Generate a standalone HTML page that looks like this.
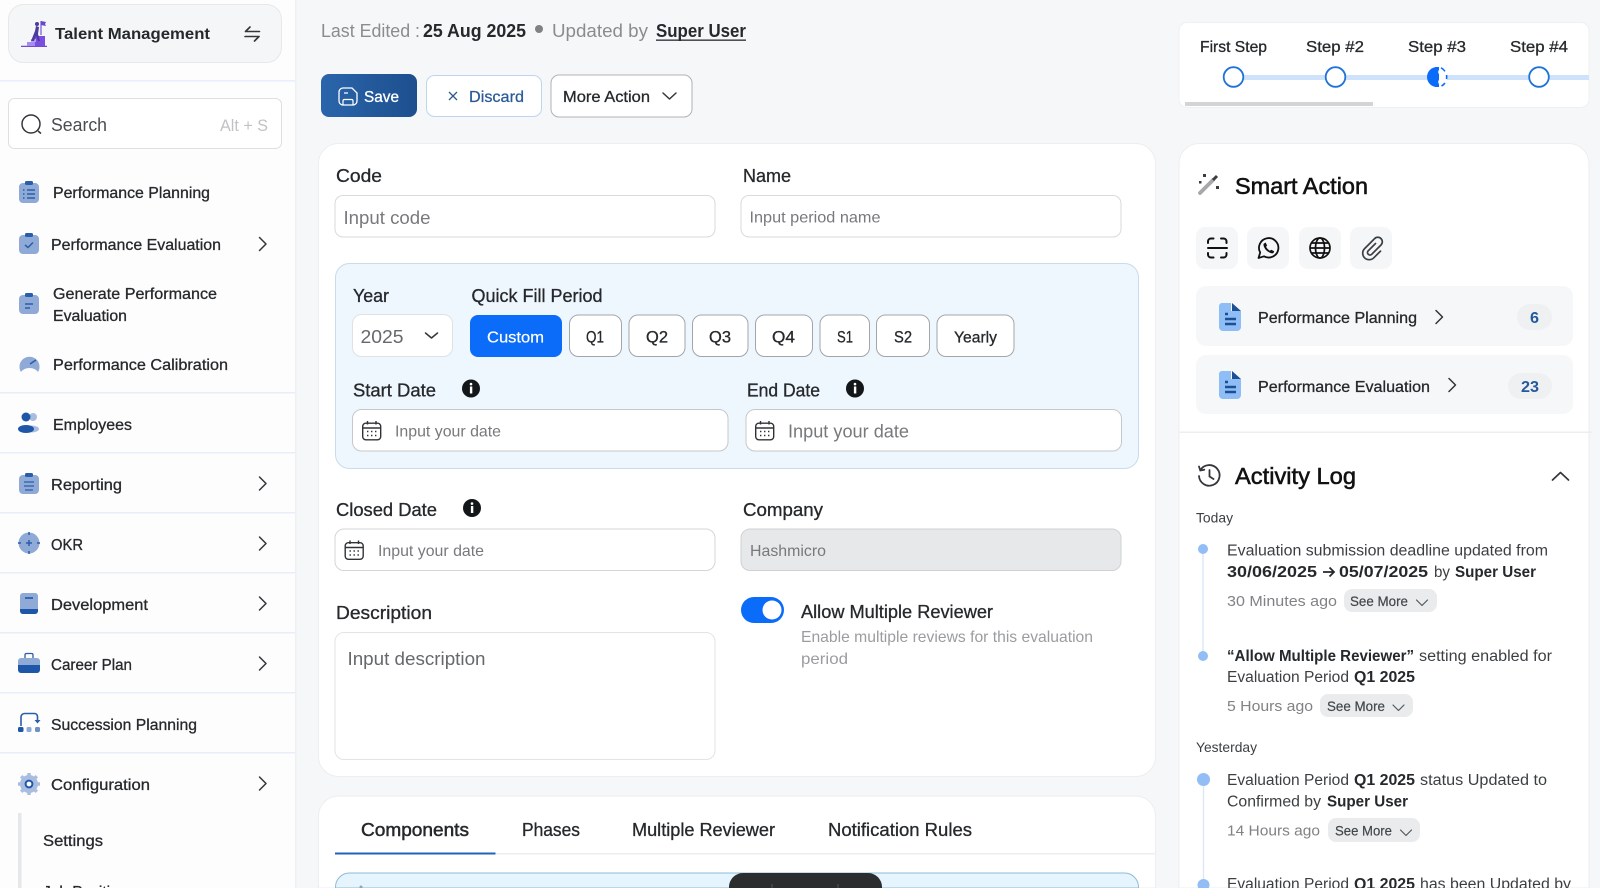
<!DOCTYPE html>
<html lang="en"><head><meta charset="utf-8"><title>Talent Management</title>
<style>
html,body{margin:0;padding:0;width:1600px;height:888px;overflow:hidden;background:#f5f7f9}
#w{position:absolute;left:0;top:0;width:1600px;height:888px;overflow:hidden}
svg{display:block;filter:blur(.25px)}
text{font-family:"Liberation Sans",sans-serif;font-size:16px;fill:#26292c;white-space:pre}
.m{stroke:#26292c;stroke-width:.3}
.b{font-weight:700}
.h{font-size:18px}
.p{font-size:16px;fill:#77797c}
.pl{font-size:18px;fill:#77797c}
.t{font-size:15.5px;fill:#3c3f42}
.tb{font-size:15.5px;font-weight:700;fill:#26292c}
.g{font-size:15px;fill:#808285}
.s{font-size:13.5px;fill:#44474a;stroke:#44474a;stroke-width:.2}
.ch{fill:none;stroke:#33363a;stroke-width:1.5;stroke-linecap:round;stroke-linejoin:round}
</style></head><body><div id="w">
<svg width="1600" height="888" viewBox="0 0 1600 888" xmlns="http://www.w3.org/2000/svg">
<defs>
<g id="cr"><path class="ch" d="M0 0l6.5 6.5L0 13"/></g>
<g id="cd"><path class="ch" d="M0 0l5.5 5.5L11 0" style="stroke-width:1.2;stroke:#55585b"/></g>
<g id="cal" fill="none" stroke="#303336" stroke-width="1.4"><rect x=".7" y="2.7" width="18" height="16.6" rx="3.2"/><path d="M.7 7.5h18M5.5 .5v3.5M14 .5v3.5"/><path d="M5 11h1.4M9 11h1.4M13 11h1.4M5 15h1.4M9 15h1.4M13 15h1.4" stroke-width="1.5"/></g>
<g id="inf"><circle r="9" fill="#14171a"/><rect x="-1.1" y="-2" width="2.4" height="7" fill="#fff"/><circle cy="-4.4" r="1.3" fill="#fff"/></g>
<g id="doc"><path d="M3 0h9v8h10v16a4 4 0 0 1-4 4H4a4 4 0 0 1-4-4V3a3 3 0 0 1 3-3z" fill="#8fbdf5"/><path d="M13 0l9 8h-9z" fill="#1d4f94"/><path d="M6 11h3M6 16h11M6 21h11" stroke="#1d4f94" stroke-width="2.4" fill="none"/></g>
<linearGradient id="sv" x1="0" x2="1"><stop offset="0" stop-color="#2a65ab"/><stop offset="1" stop-color="#1d4f8e"/></linearGradient>
</defs>

<!-- sidebar -->
<rect x="0" y="0" width="295" height="888" fill="#fdfdfe"/>
<rect x="295" y="0" width="1.5" height="888" fill="#eef1f4"/>
<rect x="8.5" y="4.5" width="273" height="58" rx="15" fill="#f4f6f8" stroke="#e6e8ea"/>
<rect x="0" y="80" width="295" height="1.6" fill="#e8eefb"/>
<!-- logo -->
<path d="M21 46.300h26" stroke="#5b35c9" stroke-width="1.200"/>
<path d="M35 46V36h10v10z" fill="#7a4fe0"/><path d="M27 46v-4h8v4z" fill="#a78bee"/><path d="M31 42v-3h5v3z" fill="#b79ff2"/>
<path d="M31 41l4-10 1-5 3 1-1 7 2 7h-2l-2-5-2 5z" fill="#4d3a9e"/><circle cx="37" cy="24" r="2" fill="#4d3a9e"/>
<path d="M41 21v14" stroke="#5b35c9"/><path d="M41 21l5 1-1 2 1 2-5-1z" fill="#6a46cf"/>
<text class="b" x="55" y="39" textLength="155" lengthAdjust="spacingAndGlyphs">Talent Management</text>
<path class="ch" d="M245.500 31.500h14M245.500 31.500l4.500-4.500M259 36.500h-14M259 36.500l-4.500 4.500" style="stroke-width:1.600"/>

<rect x="8.500" y="98.500" width="273" height="50" rx="6" fill="#fff" stroke="#dcdfe3"/>
<circle cx="31" cy="124" r="9" fill="none" stroke="#33363a" stroke-width="1.500"/><path d="M38 131l3 2.500" stroke="#33363a" stroke-width="1.500"/>
<text x="51" y="131" textLength="56" lengthAdjust="spacingAndGlyphs" style="font-size:18px;fill:#4a4d50">Search</text>
<text x="220" y="131" textLength="48" lengthAdjust="spacingAndGlyphs" style="font-size:17px;fill:#c0c2c5">Alt + S</text>

<!-- menu icons -->
<g><rect x="19" y="183" width="20" height="20" rx="4" fill="#8faad6"/><rect x="25" y="181" width="8" height="4" rx="1.500" fill="#2a5ea8"/><path d="M23 190h1.500M27 190h8M23 194h1.500M27 194h8M23 198h1.500M27 198h8" stroke="#2a5ea8" stroke-width="1.400"/></g>
<g><rect x="19" y="235" width="20" height="19" rx="4" fill="#8faad6"/><rect x="25" y="233" width="8" height="4" rx="1.500" fill="#2a5ea8"/><path d="M25 245l3 2.500 5-5" fill="none" stroke="#2a5ea8" stroke-width="1.500"/></g>
<g><rect x="19" y="295" width="20" height="19" rx="4" fill="#8faad6"/><rect x="25" y="293" width="8" height="4" rx="1.500" fill="#2a5ea8"/><path d="M25 304h8M25 308h5" stroke="#2a5ea8" stroke-width="1.600"/></g>
<path d="M21 372a10 10 0 1 1 17 0q-3-4-8.500-4t-8.500 4z" fill="#8faad6"/><path d="M30 364l6-4" stroke="#2a5ea8" stroke-width="1.600"/>
<g><circle cx="33" cy="417" r="4" fill="#a9bde0"/><ellipse cx="31" cy="429" rx="8" ry="3.500" fill="#a9bde0"/><circle cx="26" cy="417" r="4.500" fill="#1f57a8"/><ellipse cx="26" cy="429" rx="8" ry="4" fill="#1f57a8"/></g>
<g><rect x="19" y="475" width="20" height="19" rx="4" fill="#8faad6"/><rect x="25" y="473" width="8" height="4" rx="1.500" fill="#2a5ea8"/><path d="M24 482h10M24 486h10M25 490h8" stroke="#2a5ea8" stroke-width="1.300"/></g>
<g><circle cx="29" cy="543" r="10.500" fill="#8faad6"/><path d="M26 543h6M29 540v6M18 543h3M37 543h3M29 532v3M29 551v3" stroke="#2a5ea8" stroke-width="1.500"/></g>
<g><rect x="20" y="593" width="18" height="21" rx="3" fill="#8faad6"/><path d="M20 609h18v2a3 3 0 0 1-3 3H23a3 3 0 0 1-3-3z" fill="#1f57a8"/><path d="M25 598h8" stroke="#1f57a8" stroke-width="1.600"/></g>
<g><path d="M25 658v-3q0-1.500 1.500-1.500h5q1.500 0 1.500 1.500v3" fill="none" stroke="#2a5ea8" stroke-width="1.300"/><path d="M18 661a3 3 0 0 1 3-3h16a3 3 0 0 1 3 3v4H18z" fill="#8faad6"/><path d="M18 665h22v5a3 3 0 0 1-3 3H21a3 3 0 0 1-3-3z" fill="#1f57a8"/></g>
<g><path d="M21 726v-9a3.500 3.500 0 0 1 3.500-3.500h10a3 3 0 0 1 3 3v4" fill="none" stroke="#2a5ea8" stroke-width="1.600"/><path d="M34.500 720l3 3.500 3-3.500" fill="#2a5ea8"/><rect x="18" y="727" width="5.500" height="5" rx="1.500" fill="#1f57a8"/><rect x="26.500" y="727" width="5" height="5" rx="1.500" fill="#8faad6"/><rect x="35" y="727" width="5" height="5" rx="1.500" fill="#6f90c6"/></g>
<g><circle cx="29" cy="784" r="9" fill="#a9bde0"/><path d="M29 773v22M18 784h22M21.200 776.200l15.600 15.600M36.800 776.200l-15.600 15.600" stroke="#a9bde0" stroke-width="3.500"/><circle cx="29" cy="784" r="3.400" fill="#fff" stroke="#1f57a8" stroke-width="2"/></g>

<text class="m" x="53" y="198" textLength="157" lengthAdjust="spacingAndGlyphs">Performance Planning</text>
<text class="m" x="51" y="250" textLength="170" lengthAdjust="spacingAndGlyphs">Performance Evaluation</text>
<use href="#cr" x="259.500" y="237.500"/>
<text class="m" x="53" y="299" textLength="164" lengthAdjust="spacingAndGlyphs">Generate Performance</text>
<text class="m" x="53" y="321" textLength="74" lengthAdjust="spacingAndGlyphs">Evaluation</text>
<text class="m" x="53" y="370" textLength="175" lengthAdjust="spacingAndGlyphs">Performance Calibration</text>
<rect x="0" y="392" width="295" height="1.500" fill="#e8eef8"/>
<text class="m" x="53" y="430" textLength="79" lengthAdjust="spacingAndGlyphs">Employees</text>
<rect x="0" y="452" width="295" height="1.500" fill="#e8eef8"/>
<text class="m" x="51" y="490" textLength="71" lengthAdjust="spacingAndGlyphs">Reporting</text>
<use href="#cr" x="259.500" y="477"/>
<rect x="0" y="512" width="295" height="1.500" fill="#e8eef8"/>
<text class="m" x="51" y="550" textLength="32" lengthAdjust="spacingAndGlyphs">OKR</text>
<use href="#cr" x="259.500" y="537"/>
<rect x="0" y="572" width="295" height="1.500" fill="#e8eef8"/>
<text class="m" x="51" y="610" textLength="97" lengthAdjust="spacingAndGlyphs">Development</text>
<use href="#cr" x="259.500" y="597"/>
<rect x="0" y="632" width="295" height="1.500" fill="#e8eef8"/>
<text class="m" x="51" y="670" textLength="81" lengthAdjust="spacingAndGlyphs">Career Plan</text>
<use href="#cr" x="259.500" y="657"/>
<rect x="0" y="692" width="295" height="1.500" fill="#e8eef8"/>
<text class="m" x="51" y="730" textLength="146" lengthAdjust="spacingAndGlyphs">Succession Planning</text>
<rect x="0" y="752" width="295" height="1.500" fill="#e8eef8"/>
<text class="m" x="51" y="790" textLength="99" lengthAdjust="spacingAndGlyphs">Configuration</text>
<use href="#cr" x="259.500" y="777"/>
<rect x="18" y="813" width="3.500" height="75" fill="#e6e7e9"/>
<text class="m" x="43" y="846" textLength="60" lengthAdjust="spacingAndGlyphs">Settings</text>
<text class="m" x="43" y="897" textLength="92" lengthAdjust="spacingAndGlyphs">Job Positions</text>

<!-- top bar -->
<text class="h" x="321" y="37" textLength="99" lengthAdjust="spacingAndGlyphs" style="fill:#8a8c8f">Last Edited :</text>
<text class="h b" x="423" y="37" textLength="103" lengthAdjust="spacingAndGlyphs">25 Aug 2025</text>
<circle cx="539" cy="29" r="4" fill="#808285"/>
<text class="h" x="552" y="37" textLength="96" lengthAdjust="spacingAndGlyphs" style="fill:#8a8c8f">Updated by</text>
<text class="h b" x="656" y="37" textLength="90" lengthAdjust="spacingAndGlyphs">Super User</text>
<rect x="656" y="39.500" width="90" height="1.300" fill="#26292c"/>

<rect x="321" y="74" width="96" height="43" rx="8" fill="url(#sv)"/>
<path d="M343 88h9l5 5v8a4 4 0 0 1-4 4h-10a4 4 0 0 1-4-4v-9a4 4 0 0 1 4-4z" fill="none" stroke="#fff" stroke-width="1.300"/><path d="M343 105v-4q0-1.500 1.500-1.500h7q1.500 0 1.500 1.500v4M344 93h4" fill="none" stroke="#fff" stroke-width="1.200"/>
<text x="364" y="102" textLength="35" lengthAdjust="spacingAndGlyphs" style="fill:#fff;stroke:#fff;stroke-width:.3">Save</text>
<rect x="426.500" y="75.500" width="115" height="41" rx="8" fill="#fff" stroke="#bcd6f0"/>
<path d="M449 92l8 8M457 92l-8 8" stroke="#2b5a96" stroke-width="1.300"/>
<text x="469" y="102" textLength="55" lengthAdjust="spacingAndGlyphs" style="fill:#2b5a96;stroke:#2b5a96;stroke-width:.25">Discard</text>
<rect x="551" y="75" width="141" height="42" rx="8" fill="#fff" stroke="#b0b3b6"/>
<text class="m" x="563" y="102" textLength="87" lengthAdjust="spacingAndGlyphs">More Action</text>
<path class="ch" d="M663 93l6.500 6 6.500-6"/>

<!-- card 1 -->
<rect x="318.500" y="143.500" width="837" height="633" rx="20" fill="#fff" stroke="#eceef0"/>
<text class="h m" x="336" y="182" textLength="46" lengthAdjust="spacingAndGlyphs">Code</text>
<text class="h m" x="743" y="182" textLength="48" lengthAdjust="spacingAndGlyphs">Name</text>
<rect x="335" y="195.500" width="380" height="41.500" rx="8" fill="#fff" stroke="#d8dadc"/>
<text class="pl" x="343.500" y="224" textLength="87" lengthAdjust="spacingAndGlyphs">Input code</text>
<rect x="741" y="195.500" width="380" height="41.500" rx="8" fill="#fff" stroke="#d8dadc"/>
<text class="p" x="749.500" y="222.500" textLength="131" lengthAdjust="spacingAndGlyphs">Input period name</text>

<!-- blue panel -->
<rect x="335.500" y="263.500" width="803" height="205" rx="14" fill="#eef6fe" stroke="#c8dcec"/>
<text class="h m" x="353" y="302" textLength="36" lengthAdjust="spacingAndGlyphs">Year</text>
<text class="h m" x="471.500" y="302" textLength="131" lengthAdjust="spacingAndGlyphs">Quick Fill Period</text>
<rect x="352.500" y="314.500" width="100" height="42" rx="9" fill="#fff" stroke="#dfe2e5"/>
<text class="pl" x="360.500" y="343" textLength="43" lengthAdjust="spacingAndGlyphs" style="fill:#66696c">2025</text>
<path class="ch" d="M425.500 333l6 5 6-5"/>
<rect x="470" y="315" width="92" height="42" rx="8" fill="#0a6cf8"/>
<text x="487" y="342.500" textLength="57" lengthAdjust="spacingAndGlyphs" style="fill:#fff;stroke:#fff;stroke-width:.2">Custom</text>
<g fill="#fff" stroke="#a3a6a9">
<rect x="569.500" y="315" width="52" height="41.500" rx="9"/>
<rect x="629" y="315" width="56" height="41.500" rx="9"/>
<rect x="692.500" y="315" width="55.500" height="41.500" rx="9"/>
<rect x="755.500" y="315" width="57" height="41.500" rx="9"/>
<rect x="820" y="315" width="49.500" height="41.500" rx="9"/>
<rect x="876.500" y="315" width="53" height="41.500" rx="9"/>
<rect x="937" y="315" width="77" height="41.500" rx="9"/>
</g>
<text class="m" x="586" y="342.500" textLength="18" lengthAdjust="spacingAndGlyphs" style="font-size:17px">Q1</text>
<text class="m" x="646" y="342.500" textLength="22" lengthAdjust="spacingAndGlyphs" style="font-size:17px">Q2</text>
<text class="m" x="709" y="342.500" textLength="22" lengthAdjust="spacingAndGlyphs" style="font-size:17px">Q3</text>
<text class="m" x="772" y="342.500" textLength="23" lengthAdjust="spacingAndGlyphs" style="font-size:17px">Q4</text>
<text class="m" x="837" y="342.500" textLength="16" lengthAdjust="spacingAndGlyphs" style="font-size:17px">S1</text>
<text class="m" x="894" y="342.500" textLength="18" lengthAdjust="spacingAndGlyphs" style="font-size:17px">S2</text>
<text class="m" x="954" y="342.500" textLength="43" lengthAdjust="spacingAndGlyphs">Yearly</text>
<text class="h m" x="353" y="396.500" textLength="83" lengthAdjust="spacingAndGlyphs">Start Date</text>
<use href="#inf" x="471" y="388.500"/>
<text class="h m" x="747" y="396.500" textLength="73" lengthAdjust="spacingAndGlyphs">End Date</text>
<use href="#inf" x="855" y="388.500"/>
<rect x="352.500" y="409.500" width="375.500" height="41.500" rx="9" fill="#fff" stroke="#c5c8cb"/>
<use href="#cal" x="362" y="420.500"/>
<text class="p" x="395" y="436.500" textLength="106" lengthAdjust="spacingAndGlyphs">Input your date</text>
<rect x="746" y="409.500" width="375.500" height="41.500" rx="9" fill="#fff" stroke="#c5c8cb"/>
<use href="#cal" x="755" y="420.500"/>
<text class="pl" x="788" y="437.500" textLength="121" lengthAdjust="spacingAndGlyphs">Input your date</text>

<text class="h m" x="336" y="516" textLength="101" lengthAdjust="spacingAndGlyphs">Closed Date</text>
<use href="#inf" x="472" y="508"/>
<text class="h m" x="743" y="516" textLength="80" lengthAdjust="spacingAndGlyphs">Company</text>
<rect x="335" y="529" width="380" height="41.500" rx="9" fill="#fff" stroke="#d3d5d8"/>
<use href="#cal" x="344.500" y="540"/>
<text class="p" x="378" y="556" textLength="106" lengthAdjust="spacingAndGlyphs">Input your date</text>
<rect x="741" y="529" width="380" height="41.500" rx="9" fill="#e6e8ea" stroke="#cfd2d5"/>
<text class="p" x="750" y="556" textLength="76" lengthAdjust="spacingAndGlyphs">Hashmicro</text>
<text class="h m" x="336" y="619" textLength="96" lengthAdjust="spacingAndGlyphs">Description</text>
<rect x="335" y="632.500" width="380" height="127" rx="9" fill="#fff" stroke="#e2e4e6"/>
<text class="pl" x="347.500" y="665" textLength="138" lengthAdjust="spacingAndGlyphs" style="fill:#66696c">Input description</text>
<rect x="741" y="597" width="43" height="26" rx="13" fill="#0a6cf8"/><circle cx="772" cy="610" r="9.500" fill="#fff"/>
<text class="h m" x="801" y="618" textLength="192" lengthAdjust="spacingAndGlyphs">Allow Multiple Reviewer</text>
<text class="p" x="801" y="642" textLength="292" lengthAdjust="spacingAndGlyphs" style="fill:#9a9c9f">Enable multiple reviews for this evaluation</text>
<text class="p" x="801" y="664" textLength="47" lengthAdjust="spacingAndGlyphs" style="fill:#9a9c9f">period</text>

<!-- card 2 -->
<path d="M318.500 888V816a20 20 0 0 1 20-20h797a20 20 0 0 1 20 20v72z" fill="#fff" stroke="#eceef0"/>
<text class="h m" x="361" y="836" textLength="108" lengthAdjust="spacingAndGlyphs" style="stroke-width:.5">Components</text>
<text class="h m" x="522" y="836" textLength="58" lengthAdjust="spacingAndGlyphs">Phases</text>
<text class="h m" x="632" y="836" textLength="143" lengthAdjust="spacingAndGlyphs">Multiple Reviewer</text>
<text class="h m" x="828" y="836" textLength="144" lengthAdjust="spacingAndGlyphs">Notification Rules</text>
<rect x="335" y="853" width="820" height="1.500" fill="#eceef0"/>
<rect x="335" y="852.500" width="160.500" height="2" fill="#1f62c0"/>
<path d="M335.500 888v-1a14 14 0 0 1 14-14h775a14 14 0 0 1 14 14v1z" fill="#e6f4fd" stroke="#8fbbd8"/>
<circle cx="361" cy="887" r="1.500" fill="#8fa5b5"/>
<path d="M729 888v-1a14 14 0 0 1 14-14h125a14 14 0 0 1 14 14v1z" fill="#2b2d2f"/>
<path d="M772 884v4M838 884v4" stroke="#55585a"/>

<!-- stepper -->
<rect x="1179" y="22.500" width="410" height="85" rx="8" fill="#fff" stroke="#eef0f2"/>
<text class="m" x="1200" y="52" textLength="67" lengthAdjust="spacingAndGlyphs">First Step</text>
<text class="m" x="1306" y="52" textLength="58" lengthAdjust="spacingAndGlyphs">Step #2</text>
<text class="m" x="1408" y="52" textLength="58" lengthAdjust="spacingAndGlyphs">Step #3</text>
<text class="m" x="1510" y="52" textLength="58" lengthAdjust="spacingAndGlyphs">Step #4</text>
<rect x="1240" y="75" width="349" height="5" fill="#cfe2fb"/>
<g fill="#fff" stroke="#1f72d8" stroke-width="1.800">
<circle cx="1233.500" cy="77" r="9.800"/><circle cx="1335.500" cy="77" r="9.800"/><circle cx="1539" cy="77" r="9.800"/></g>
<circle cx="1437" cy="77" r="10" fill="#fff"/>
<path d="M1437 67a10 10 0 0 0 0 20z" fill="#0a6cf8"/>
<path d="M1435 67h4v20h-4z" fill="#0a6cf8"/><path d="M1439 70.500v3M1439 80.500v3" stroke="#fff" stroke-width="1.500"/>
<path d="M1441 67.800a10 10 0 0 1 4 3.500M1446.500 75a10 10 0 0 1 0 4M1445 83a10 10 0 0 1-3.500 3" fill="none" stroke="#0a6cf8" stroke-width="1.600"/>
<rect x="1185" y="102" width="188" height="4" fill="#d4d4d5"/>

<!-- right card -->
<path d="M1179 888V163.500a20 20 0 0 1 20-20h370a20 20 0 0 1 20 20V888z" fill="#fff" stroke="#eceef0"/>
<rect x="1179" y="431.500" width="413" height="1.500" fill="#eceef0"/>
<g><path d="M1200 193l13-13" stroke="#a6a8aa" stroke-width="3.800" stroke-linecap="round"/><path d="M1213 180l4-4" stroke="#3a3d40" stroke-width="3"/><rect x="1203" y="174" width="3" height="3" fill="#3a3d40"/><rect x="1199" y="181" width="2.500" height="2.500" fill="#3a3d40"/><rect x="1216" y="186" width="3" height="3" fill="#3a3d40"/></g>
<text x="1235" y="194" textLength="133" lengthAdjust="spacingAndGlyphs" style="font-size:23px;fill:#111;stroke:#111;stroke-width:.55">Smart Action</text>
<g fill="#f5f6f8"><rect x="1196" y="227" width="42" height="42" rx="9"/><rect x="1247" y="227" width="42" height="42" rx="9"/><rect x="1299" y="227" width="42" height="42" rx="9"/><rect x="1350" y="227" width="42" height="42" rx="9"/></g>
<path d="M1208 243v-1.500a3 3 0 0 1 3-3h2.500M1221 238.500h2.500a3 3 0 0 1 3 3v1.500M1208 253v1.500a3 3 0 0 0 3 3h2.500M1221 257.500h2.500a3 3 0 0 0 3-3V253M1208 248h19" fill="none" stroke="#111" stroke-width="2" stroke-linecap="round"/>
<g fill="none" stroke="#111" stroke-width="1.800"><path d="M1258.500 258l1.700-5.500a9.700 9.700 0 1 1 3.800 3.800z" stroke-linejoin="round"/><path d="M1264 243.500c-1.500 1 .5 5 2.500 7s5.500 3.500 7 2.500l.7-1.800-3-1.500-1.300 1c-1-.4-3.300-2.600-3.800-4l1-1.200-1.500-3z" fill="#111" stroke="none"/></g>
<g fill="none" stroke="#111" stroke-width="1.700"><circle cx="1320" cy="248" r="10"/><ellipse cx="1320" cy="248" rx="4.500" ry="10"/><path d="M1310 248h20M1311.500 243h17M1311.500 253h17"/></g>
<path d="M1375.500 243.500l-7.500 7.500a2.500 2.500 0 0 0 3.500 3.500l9.500-9.500a4.500 4.500 0 0 0-6.400-6.400l-10 10a6.500 6.500 0 0 0 9.200 9.200l6.700-6.700" fill="none" stroke="#3c3f42" stroke-width="1.700" stroke-linecap="round"/>

<rect x="1196" y="286" width="377" height="60" rx="10" fill="#f6f7f9"/>
<use href="#doc" x="1219" y="303"/>
<text class="m" x="1258" y="323" textLength="159" lengthAdjust="spacingAndGlyphs">Performance Planning</text>
<use href="#cr" x="1436" y="310.500"/>
<rect x="1517" y="304" width="35" height="26" rx="13" fill="#eef0f2"/>
<text class="b" x="1530" y="323" textLength="9" lengthAdjust="spacingAndGlyphs" style="fill:#255a9a">6</text>
<rect x="1196" y="355" width="377" height="59" rx="10" fill="#f6f7f9"/>
<use href="#doc" x="1219" y="371"/>
<text class="m" x="1258" y="392" textLength="172" lengthAdjust="spacingAndGlyphs">Performance Evaluation</text>
<use href="#cr" x="1449" y="378.500"/>
<rect x="1508" y="373" width="44" height="26" rx="13" fill="#eef0f2"/>
<text class="b" x="1521" y="392" textLength="18" lengthAdjust="spacingAndGlyphs" style="fill:#255a9a">23</text>

<path d="M1200.500 470a10.300 10.300 0 1 1-1.500 6M1199 466.500l1.300 4 4-.8M1209.500 470v6.500l4 2.500" fill="none" stroke="#33363a" stroke-width="1.800" stroke-linecap="round"/>
<text x="1235" y="484" textLength="121" lengthAdjust="spacingAndGlyphs" style="font-size:23px;fill:#111;stroke:#111;stroke-width:.55">Activity Log</text>
<path class="ch" d="M1552.500 480l8-7.500 8 7.500" style="stroke-width:1.700"/>
<text x="1196" y="522.500" textLength="37" lengthAdjust="spacingAndGlyphs" style="font-size:14px;fill:#3c3f42">Today</text>

<!-- log -->
<rect x="1202.300" y="549" width="1.400" height="107" fill="#dbe7fb"/>
<circle cx="1203" cy="549" r="5" fill="#92bdf5"/><circle cx="1203" cy="656" r="5" fill="#92bdf5"/>
<text class="t" x="1227" y="555.500" textLength="321" lengthAdjust="spacingAndGlyphs">Evaluation submission deadline updated from</text>
<text class="tb" x="1227" y="577" textLength="90" lengthAdjust="spacingAndGlyphs">30/06/2025</text>
<path d="M1323 572h11M1329.500 567.500l4.500 4.500-4.500 4.500" fill="none" stroke="#26292c" stroke-width="1.800"/>
<text class="tb" x="1339" y="577" textLength="89" lengthAdjust="spacingAndGlyphs">05/07/2025</text>
<text class="t" x="1434" y="577" textLength="16" lengthAdjust="spacingAndGlyphs">by</text>
<text class="tb" x="1455" y="577" textLength="81" lengthAdjust="spacingAndGlyphs">Super User</text>
<text class="g" x="1227" y="606" textLength="110" lengthAdjust="spacingAndGlyphs">30 Minutes ago</text>
<rect x="1344" y="589" width="93" height="23" rx="8" fill="#e9ebed"/>
<text class="s" x="1350" y="606" textLength="58" lengthAdjust="spacingAndGlyphs">See More</text>
<use href="#cd" x="1416.500" y="600"/>

<text class="tb" x="1227" y="661" textLength="187" lengthAdjust="spacingAndGlyphs">“Allow Multiple Reviewer”</text>
<text class="t" x="1419" y="661" textLength="133" lengthAdjust="spacingAndGlyphs">setting enabled for</text>
<text class="t" x="1227" y="682" textLength="122" lengthAdjust="spacingAndGlyphs">Evaluation Period</text>
<text class="tb" x="1354" y="682" textLength="61" lengthAdjust="spacingAndGlyphs">Q1 2025</text>
<text class="g" x="1227" y="711" textLength="86" lengthAdjust="spacingAndGlyphs">5 Hours ago</text>
<rect x="1320" y="694" width="93" height="23" rx="8" fill="#e9ebed"/>
<text class="s" x="1327" y="711" textLength="58" lengthAdjust="spacingAndGlyphs">See More</text>
<use href="#cd" x="1393" y="705"/>

<text x="1196" y="752" textLength="61" lengthAdjust="spacingAndGlyphs" style="font-size:14px;fill:#3c3f42">Yesterday</text>

<rect x="1202.800" y="785" width="1.400" height="100" fill="#dbe7fb"/>
<circle cx="1203.500" cy="779.500" r="6.500" fill="#92bdf5"/>
<text class="t" x="1227" y="785" textLength="122" lengthAdjust="spacingAndGlyphs">Evaluation Period</text>
<text class="tb" x="1354" y="785" textLength="61" lengthAdjust="spacingAndGlyphs">Q1 2025</text>
<text class="t" x="1420" y="785" textLength="127" lengthAdjust="spacingAndGlyphs">status Updated to</text>
<text class="t" x="1227" y="806.500" textLength="94" lengthAdjust="spacingAndGlyphs">Confirmed by</text>
<text class="tb" x="1327" y="806.500" textLength="81" lengthAdjust="spacingAndGlyphs">Super User</text>
<text class="g" x="1227" y="835.500" textLength="93" lengthAdjust="spacingAndGlyphs">14 Hours ago</text>
<rect x="1328" y="818" width="92" height="24" rx="8" fill="#e9ebed"/>
<text class="s" x="1335" y="835.500" textLength="57" lengthAdjust="spacingAndGlyphs">See More</text>
<use href="#cd" x="1400.500" y="830"/>

<circle cx="1203.500" cy="885" r="6" fill="#92bdf5"/>
<text class="t" x="1227" y="889" textLength="122" lengthAdjust="spacingAndGlyphs">Evaluation Period</text>
<text class="tb" x="1354" y="889" textLength="61" lengthAdjust="spacingAndGlyphs">Q1 2025</text>
<text class="t" x="1420" y="889" textLength="151" lengthAdjust="spacingAndGlyphs">has been Updated by</text>
</svg>
</div></body></html>
